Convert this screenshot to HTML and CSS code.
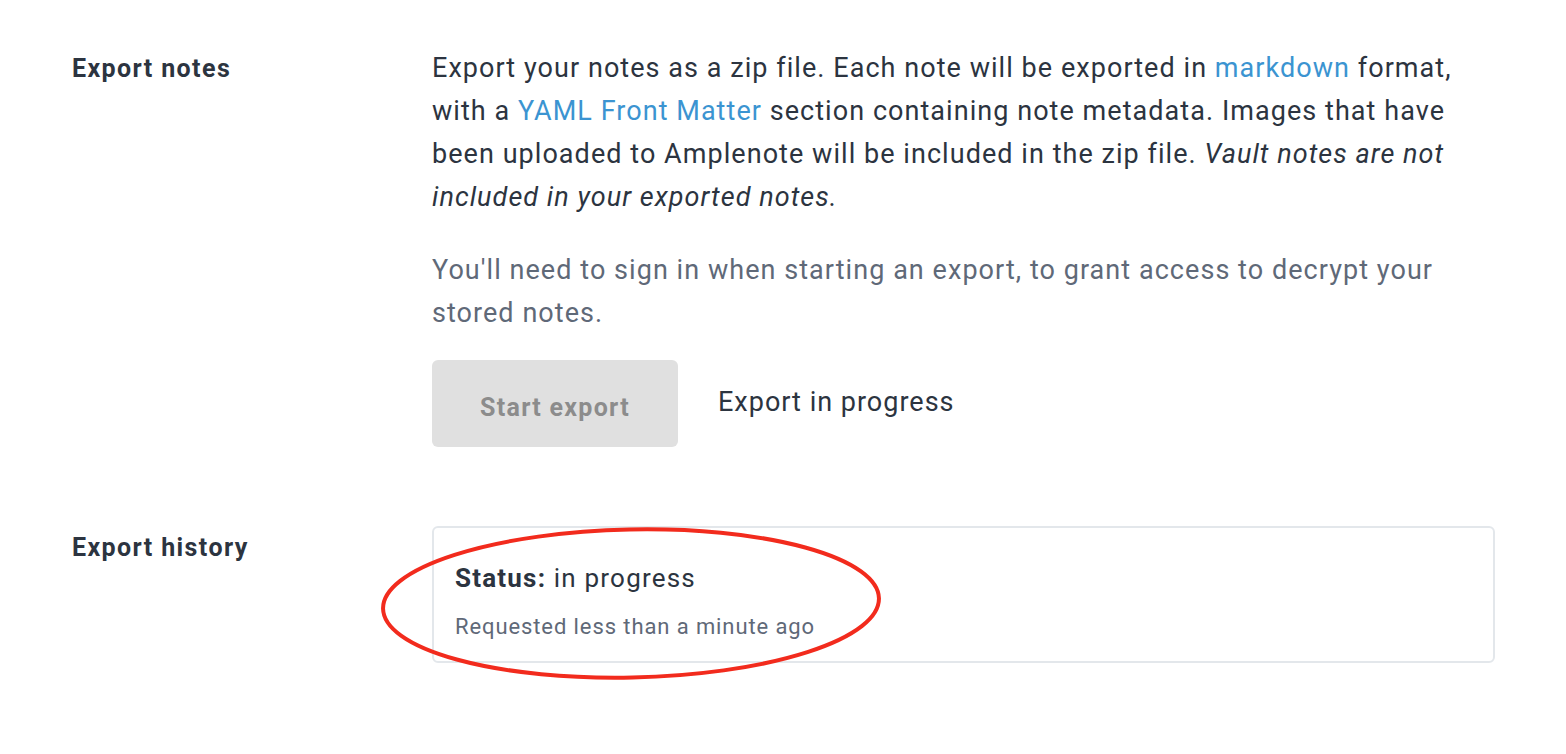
FILE: index.html
```html
<!DOCTYPE html>
<html>
<head>
<meta charset="utf-8">
<link rel="stylesheet" href="styles.css">
</head>
<body>
<div class="page">
  <section class="row">
    <div class="label">Export notes</div>
    <div class="content">
      <p class="desc">Export your notes as a zip file. Each note will be exported in <a href="#">markdown</a> format, with a <a href="#">YAML Front Matter</a> section containing note metadata. Images that have been uploaded to Amplenote will be included in the zip file. <em>Vault notes are not included in your exported notes.</em></p>
      <p class="hint">You'll need to sign in when starting an export, to grant access to decrypt your stored notes.</p>
      <div class="actions">
        <button class="btn" disabled>Start export</button>
        <span class="progress">Export in progress</span>
      </div>
    </div>
  </section>
  <section class="row history-row">
    <div class="label">Export history</div>
    <div class="content">
      <div class="history">
        <div class="status"><strong>Status:</strong> in progress</div>
        <div class="requested">Requested less than a minute ago</div>
        <svg class="circle" width="520" height="170" viewBox="0 0 520 170">
          <ellipse cx="259" cy="85.5" rx="248" ry="74" fill="none" stroke="#f22b1d" stroke-width="4" transform="rotate(-1.2 259 85.5)"/>
        </svg>
      </div>
    </div>
  </section>
</div>
</body>
</html>
```

FILE: styles.css
```css
html, body {
  margin: 0;
  padding: 0;
  background: #ffffff;
}
body {
  font-family: Roboto, "Liberation Sans", sans-serif;
  color: #2c3440;
}
.page {
  padding: 47px 71px 90px 72px;
}
.row {
  display: flex;
}
.label {
  width: 360px;
  flex: none;
  font-weight: 700;
  font-size: 25px;
  letter-spacing: 1.4px;
  line-height: 43px;
  color: #2c3440;
}
.content {
  flex: 1;
  min-width: 0;
}
.desc {
  margin: 0;
  font-size: 27px;
  letter-spacing: 1.05px;
  line-height: 43px;
}
.desc a {
  color: #3b94d1;
  text-decoration: none;
}
.hint {
  margin: 30px 0 0;
  font-size: 27px;
  letter-spacing: 1.05px;
  line-height: 43px;
  color: #5f6978;
}
.actions {
  display: flex;
  align-items: center;
  gap: 40px;
  margin-top: 25px;
}
.btn {
  width: 246px;
  height: 87px;
  border: none;
  border-radius: 6px;
  background: #e0e0e0;
  color: #8c8c8c;
  font-family: Roboto, "Liberation Sans", sans-serif;
  font-weight: 700;
  font-size: 25px;
  letter-spacing: 1.3px;
  padding: 8px 0 0;
}
.progress {
  font-size: 27px;
  letter-spacing: 1px;
  margin-top: -4px;
}
.history-row {
  margin-top: 79px;
}
.history {
  position: relative;
  border: 2px solid #e3e7eb;
  border-radius: 6px;
  height: 137px;
  box-sizing: border-box;
  padding: 33px 21px 0;
}
.status {
  font-size: 26px;
  letter-spacing: 1.2px;
  line-height: 34px;
}
.status strong {
  font-weight: 700;
}
.requested {
  margin-top: 17px;
  font-size: 22px;
  letter-spacing: 0.9px;
  line-height: 30px;
  color: #5f6978;
}
.circle {
  position: absolute;
  display: block;
  width: 520px;
  height: 170px;
  left: -62px;
  top: -10px;
  pointer-events: none;
}
```
